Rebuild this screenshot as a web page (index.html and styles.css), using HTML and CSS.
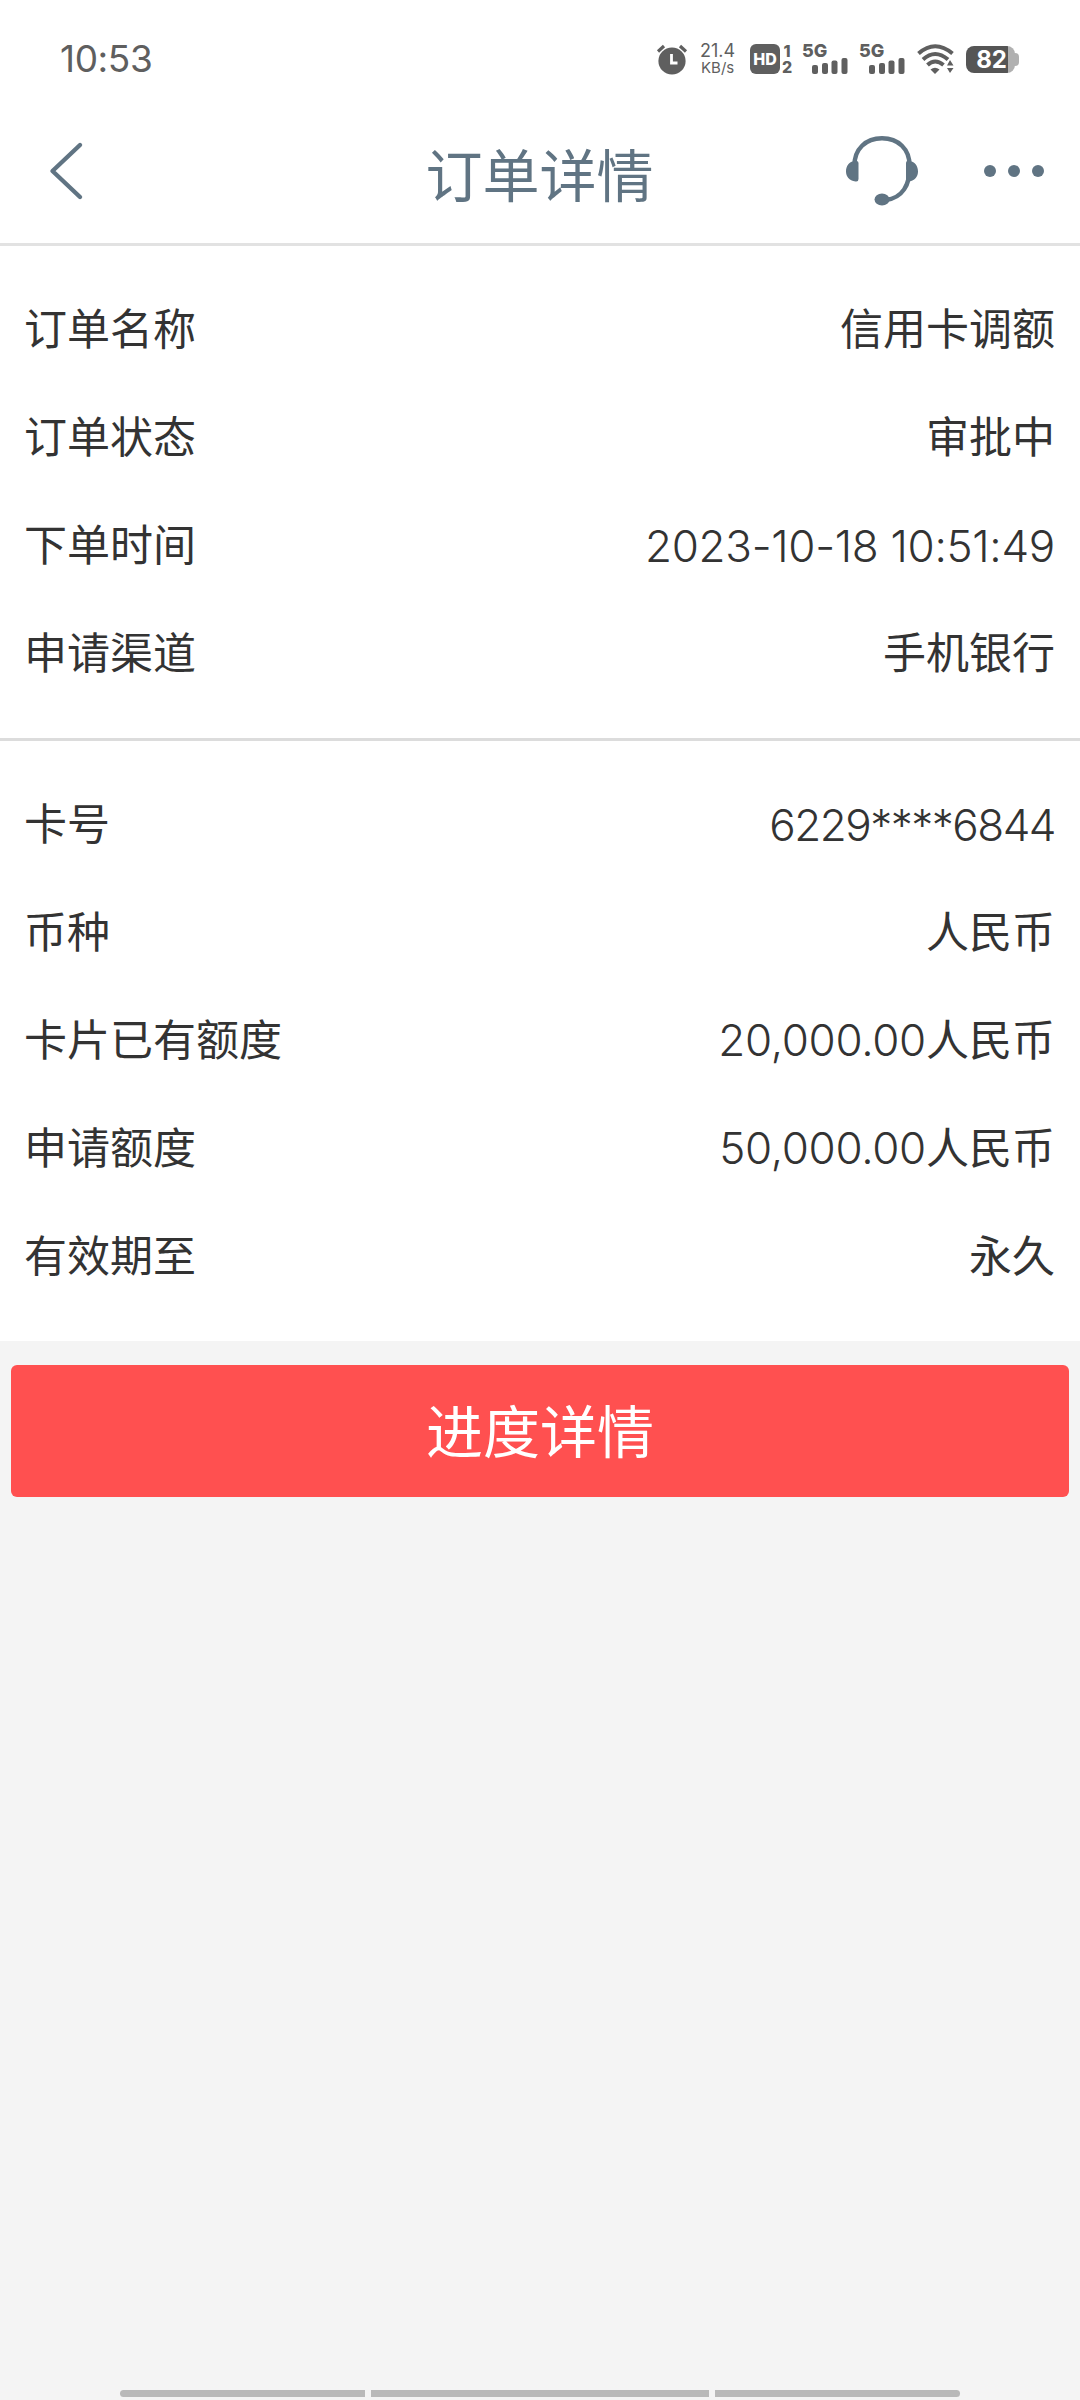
FILE: index.html
```html
<!DOCTYPE html>
<html lang="zh-CN">
<head>
    <meta charset="UTF-8">
    <meta name="viewport" content="width=device-width, initial-scale=1.0">
    <title>订单详情</title>
    <link rel="stylesheet" href="styles.css">
</head>
<body>
    <div class="status-bar">
        <span class="clock">10:53</span>
        <div class="status-icons">
            <svg class="alarm" width="32" height="32" viewBox="0 0 32 32">
                <circle cx="16" cy="18" r="13.6" fill="#5f5f5f"/>
                <path d="M2 8.500L8 3M24 3l6 5.500" stroke="#5f5f5f" stroke-width="3.200" fill="none"/>
                <path d="M15.500 11v9h6" stroke="#fff" stroke-width="2.800" fill="none"/>
            </svg>
            <div class="net-speed">
                <span class="speed">21.4</span>
                <span class="unit">KB/s</span>
            </div>
            <div class="hd">HD</div>
            <div class="sims"><span>1</span><span>2</span></div>
            <div class="signal">
                <span>5G</span>
                <svg width="36" height="18" viewBox="0 0 36 18" fill="#5f5f5f">
                    <rect x="0" y="9" width="6" height="9" rx="2"/>
                    <rect x="10" y="7" width="6" height="11" rx="2"/>
                    <rect x="19.500" y="4.500" width="6" height="13.500" rx="2"/>
                    <rect x="29.500" y="2" width="6" height="16" rx="2"/>
                </svg>
            </div>
            <div class="signal">
                <span>5G</span>
                <svg width="36" height="18" viewBox="0 0 36 18" fill="#5f5f5f">
                    <rect x="0" y="9" width="6" height="9" rx="2"/>
                    <rect x="10" y="7" width="6" height="11" rx="2"/>
                    <rect x="19.500" y="4.500" width="6" height="13.500" rx="2"/>
                    <rect x="29.500" y="2" width="6" height="16" rx="2"/>
                </svg>
            </div>
            <svg class="wifi" width="38" height="30" viewBox="0 0 38 30">
                <g fill="none" stroke="#5f5f5f" stroke-width="4">
                    <path d="M1.500 9.500Q18 -5 35.500 9.500"/>
                    <path d="M6 15.500Q18 4.500 31 15.500"/>
                    <path d="M10.500 21Q18 14 26.500 21"/>
                </g>
                <path d="M13.500 25.500Q18 22 22.500 25.500L18 30z" fill="#5f5f5f"/>
                <path d="M30 21.500l3-5.500 3.500 5.500zM30 24h6.500L33 29z" fill="#5f5f5f"/>
            </svg>
            <div class="battery"><span>82</span></div>
        </div>
    </div>

    <div class="header">
        <svg class="back" width="40" height="64" viewBox="0 0 40 64">
            <path d="M34 6L6.500 32 34 58" fill="none" stroke="#607483" stroke-width="4.400" stroke-linecap="round" stroke-linejoin="round"/>
        </svg>
        <h1>订单详情</h1>
        <div class="actions">
            <svg width="72" height="70" viewBox="0 0 72 70">
                <path d="M8.500 30C8 13 20 2.300 36 2.300S64 13 63.500 30C64.500 49 56 62 40 64" fill="none" stroke="#607483" stroke-width="4.400"/>
                <path d="M8 25h2.500q2 0 2 2v16q0 3-3 2.500C3 45 0 40 0 35.500 0 30 3 26 8 25zM64 25h-2.500q-1.500 0-1.500 2v16q0 3 3 2.500C69 45 72 40 72 35.500 72 30 69 26 64 25z" fill="#607483"/>
                <ellipse cx="36" cy="63.500" rx="7.500" ry="6" fill="#607483"/>
            </svg>
            <svg class="more" width="60" height="12" viewBox="0 0 60 12" fill="#607483">
                <circle cx="6" cy="6" r="6"/>
                <circle cx="30" cy="6" r="6"/>
                <circle cx="54" cy="6" r="6"/>
            </svg>
        </div>
    </div>

    <div class="section">
        <div class="row">
            <span>订单名称</span>
            <span>信用卡调额</span>
        </div>
        <div class="row">
            <span>订单状态</span>
            <span>审批中</span>
        </div>
        <div class="row">
            <span>下单时间</span>
            <span class="date">2023-10-18 10:51:49</span>
        </div>
        <div class="row">
            <span>申请渠道</span>
            <span>手机银行</span>
        </div>
    </div>

    <div class="section card-info">
        <div class="row">
            <span>卡号</span>
            <span class="card-no">6229****6844</span>
        </div>
        <div class="row">
            <span>币种</span>
            <span>人民币</span>
        </div>
        <div class="row">
            <span>卡片已有额度</span>
            <span><span class="amount">20,000.00</span>人民币</span>
        </div>
        <div class="row">
            <span>申请额度</span>
            <span><span class="amount">50,000.00</span>人民币</span>
        </div>
        <div class="row">
            <span>有效期至</span>
            <span>永久</span>
        </div>
    </div>

    <button type="button" class="detail-button">进度详情</button>

    <div class="nav-hint">
        <span></span>
        <span></span>
        <span></span>
    </div>
</body>
</html>
```
FILE: styles.css
```css
* {
    box-sizing: border-box;
}

body {
    margin: 0;
    height: 2400px;
    display: flex;
    flex-direction: column;
    background-color: #f4f4f4;
    color: #333;
    font-family: "Noto Sans CJK SC", sans-serif;
}

.status-bar {
    display: flex;
    justify-content: space-between;
    align-items: center;
    height: 117px;
    padding: 0 60px 0 60px;
    background-color: #fff;
    color: #5f5f5f;
    font-family: Inter, sans-serif;
}

.clock {
    font-size: 37px;
    letter-spacing: -0.4px;
}

.status-icons {
    display: flex;
    align-items: center;
}

.net-speed {
    display: flex;
    flex-direction: column;
    width: 38px;
    margin-left: 12px;
}

.speed {
    font-size: 18px;
    line-height: 18px;
}

.unit {
    font-size: 15px;
    line-height: 15px;
    padding-left: 1px;
}

.hd {
    width: 30px;
    height: 30px;
    margin-left: 12px;
    border-radius: 6px;
    background-color: #5f5f5f;
    color: #fff;
    font-size: 16px;
    font-weight: 800;
    line-height: 30px;
    text-align: center;
}

.sims {
    display: flex;
    flex-direction: column;
    width: 12px;
    margin-left: 1px;
    font-size: 16px;
    font-weight: 800;
    line-height: 16px;
    text-align: center;
}

.signal {
    display: flex;
    flex-direction: column;
    width: 46px;
    height: 30px;
    margin-left: 9px;
    font-size: 18px;
    font-weight: 800;
    line-height: 14px;
}

.signal svg {
    margin: -2px 0 0 10px;
}

.signal + .signal {
    margin-left: 11px;
}

.wifi {
    margin-left: 12px;
}

.battery {
    width: 49px;
    height: 27px;
    margin: 2px 5px 0 11px;
    border-radius: 8px;
    background: linear-gradient(to right, #555 42px, #b0b0b0 42px);
    color: #fff;
    font-size: 24px;
    font-weight: 700;
    line-height: 27px;
    text-align: right;
    padding-right: 8px;
    position: relative;
}

.battery::after {
    content: "";
    position: absolute;
    right: -4px;
    top: 7px;
    width: 5px;
    height: 13px;
    border-radius: 0 4px 4px 0;
    background-color: #b0b0b0;
}

.header {
    display: grid;
    grid-template-columns: 1fr auto 1fr;
    align-items: center;
    height: 129px;
    padding: 0 36px 19px 46px;
    background-color: #fff;
    border-bottom: 3px solid #e2e2e2;
    color: #607483;
}

.header h1 {
    margin: 2px 0 0 -11px;
    font-size: 57px;
    font-weight: 400;
    line-height: 80px;
}

.actions {
    display: flex;
    align-items: center;
    justify-content: flex-end;
    gap: 66px;
}

.section {
    padding: 26px 25px 34px 24px;
    background-color: #fff;
    border-bottom: 3px solid #dcdcdc;
}

.card-info {
    border-bottom: none;
}

.row {
    display: flex;
    justify-content: space-between;
    align-items: center;
    height: 108px;
    font-size: 43px;
}

.date,
.card-no,
.amount {
    font-family: Inter, sans-serif;
    font-size: 44px;
    font-weight: 350;
    letter-spacing: -0.3px;
}

.date,
.card-no {
    padding-top: 7px;
}

.card-no {
    letter-spacing: -1.5px;
}

.detail-button {
    height: 132px;
    margin: 24px 11px 0;
    padding: 0 0 7px;
    border: none;
    border-radius: 6px;
    background-color: #ff5050;
    color: #fff;
    font-family: inherit;
    font-size: 57px;
}

.nav-hint {
    display: grid;
    grid-template-columns: 245px 338px 245px;
    gap: 6px;
    justify-content: center;
    margin: auto 0 3px;
}

.nav-hint span {
    height: 7px;
    background-color: #b9b9b9;
}

.nav-hint span:first-child {
    border-radius: 4px 0 0 4px;
}

.nav-hint span:last-child {
    border-radius: 0 4px 4px 0;
}
```
